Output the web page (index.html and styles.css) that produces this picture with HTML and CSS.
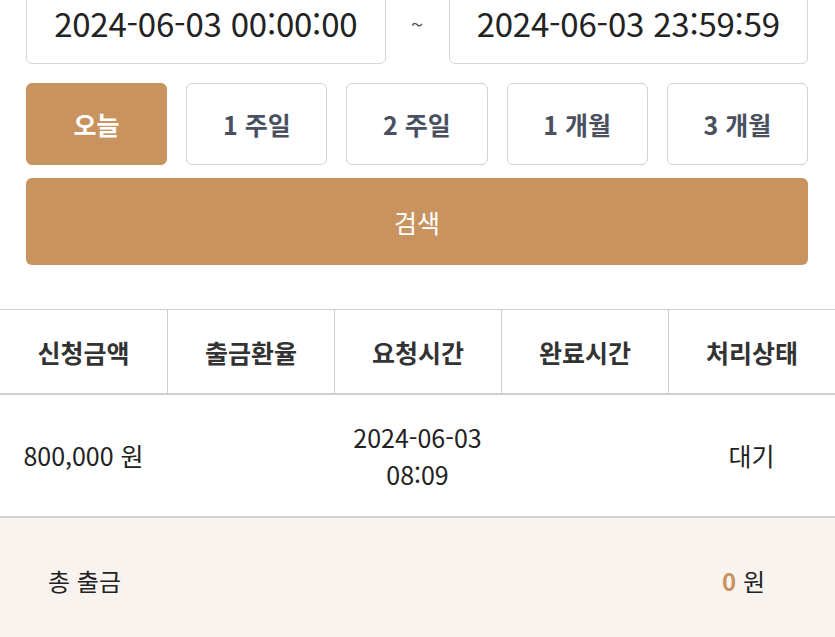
FILE: index.html
```html
<!DOCTYPE html>
<html lang="ko">
<head>
    <meta charset="UTF-8">
    <meta name="viewport" content="width=device-width, initial-scale=1.0">
    <title>출금 내역</title>
    <link rel="stylesheet" href="styles.css">
</head>
<body>
    <div class="filter">
        <div class="date-row">
            <div class="date-input">2024-06-03 00:00:00</div>
            <span class="tilde">~</span>
            <div class="date-input">2024-06-03 23:59:59</div>
        </div>
        <div class="preset-row">
            <button class="preset active">오늘</button>
            <button class="preset">1 주일</button>
            <button class="preset">2 주일</button>
            <button class="preset">1 개월</button>
            <button class="preset">3 개월</button>
        </div>
        <button class="search-btn">검색</button>
    </div>

    <div class="history">
        <div class="table-head">
            <div class="cell">신청금액</div>
            <div class="cell">출금환율</div>
            <div class="cell">요청시간</div>
            <div class="cell">완료시간</div>
            <div class="cell">처리상태</div>
        </div>
        <div class="table-row">
            <div class="cell">800,000 원</div>
            <div class="cell"></div>
            <div class="cell">2024-06-03<br>08:09</div>
            <div class="cell"></div>
            <div class="cell">대기</div>
        </div>
        <div class="summary">
            <span>총 출금</span>
            <span><b class="total">0</b> 원</span>
        </div>
    </div>
</body>
</html>
```

FILE: styles.css
```css
body {
    margin: 0;
    font-family: "Noto Sans CJK KR", "Noto Sans", sans-serif;
    background: #fff;
    color: #222;
}

/* Фильтр */
.filter {
    padding: 0 27px 0 26px;
}

.date-row {
    display: flex;
    align-items: center;
    margin-top: -19px;
}

.date-input {
    flex: 1;
    height: 81px;
    border: 1px solid #d6d6d6;
    border-radius: 6px;
    display: flex;
    align-items: center;
    justify-content: center;
    font-size: 33px;
    letter-spacing: -0.2px;
    color: #222;
}

.tilde {
    width: 63px;
    text-align: center;
    font-size: 22px;
    color: #555;
}

.preset-row {
    display: grid;
    grid-template-columns: repeat(5, 1fr);
    gap: 19px;
    margin-top: 19px;
}

button {
    font-family: inherit;
    cursor: pointer;
}

.preset {
    height: 82px;
    background: #fff;
    border: 1px solid #d4d4d4;
    border-radius: 6px;
    font-size: 25px;
    font-weight: 700;
    color: #4a5060;
}

.preset.active {
    background: #c8935f;
    border-color: #c8935f;
    color: #fff;
}

.search-btn {
    display: block;
    width: 100%;
    height: 87px;
    margin-top: 13px;
    background: #c8935f;
    border: none;
    border-radius: 6px;
    font-size: 25px;
    color: #fff;
}

/* Таблица */
.history {
    margin-top: 44px;
}

.table-head,
.table-row {
    display: grid;
    grid-template-columns: repeat(5, 1fr);
}

.table-head {
    height: 83px;
    border-top: 1px solid #cfcfcf;
    border-bottom: 2px solid #cfcfcf;
}

.table-head .cell {
    display: flex;
    align-items: center;
    justify-content: center;
    font-size: 25px;
    font-weight: 700;
    color: #333;
    border-left: 1px solid #cfcfcf;
}

.table-head .cell:first-child {
    border-left: none;
}

.table-row {
    height: 121px;
    border-bottom: 2px solid #d2d2d2;
}

.table-row .cell {
    display: flex;
    align-items: center;
    justify-content: center;
    text-align: center;
    font-size: 25px;
    line-height: 37px;
    color: #222;
}

.summary {
    height: 124px;
    background: #f9f3ef;
    display: flex;
    align-items: center;
    justify-content: space-between;
    padding: 0 70px 6px 48px;
    font-size: 24px;
    color: #222;
}

.total {
    color: #c8935f;
    font-weight: 700;
}
```
